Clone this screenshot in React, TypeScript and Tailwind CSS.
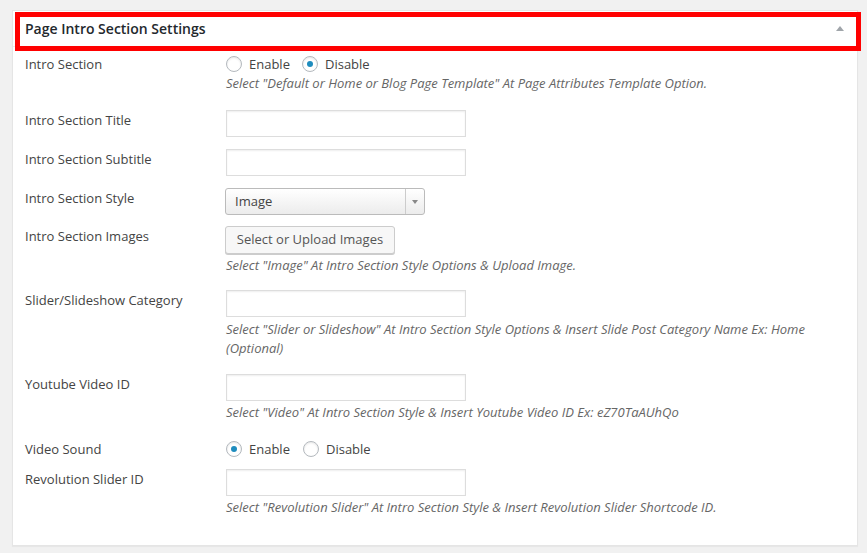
import React from "react";

const font = { fontFamily: '"Open Sans", "Liberation Sans", sans-serif' };

function Radio({ checked, label }: { checked: boolean; label: string }) {
  return (
    <span className="flex items-center">
      <span className="flex h-4 w-4 items-center justify-center rounded-full border border-[#b4b9be] bg-white shadow-[inset_0_1px_2px_rgba(0,0,0,0.1)]">
        {checked && <span className="h-[6px] w-[6px] rounded-full bg-[#1e8cbe]" />}
      </span>
      <span className="ml-[7px] text-[13px] leading-5 text-[#444]">{label}</span>
    </span>
  );
}

function TextInput() {
  return (
    <div className="h-[27px] w-[240px] border border-[#ddd] bg-white shadow-[inset_0_1px_2px_rgba(0,0,0,0.07)]" />
  );
}

function Desc({ children }: { children: React.ReactNode }) {
  return <p className="mt-[2px] text-[13px] italic leading-[19px] text-[#666]">{children}</p>;
}

function Row({ label, mt, children }: { label: string; mt: string; children: React.ReactNode }) {
  return (
    <div className={`flex ${mt}`}>
      <div className="w-[201px] shrink-0 text-[13px] leading-5 text-[#444]">{label}</div>
      <div className="w-[620px]">{children}</div>
    </div>
  );
}

export default function App() {
  return (
    <div className="min-h-[553px] w-full bg-[#f1f1f1] pl-[12px] pr-[9px] pt-[10px]" style={font}>
      <div className="relative w-[846px] border border-[#e5e5e5] bg-white pb-[28px] shadow-[0_1px_1px_rgba(0,0,0,0.04)]">
        <div className="flex h-[36px] items-center justify-between border-b border-[#eee] pl-[12px] pr-[12px]">
          <h2 className="text-[14px] font-semibold text-[#23282d]">Page Intro Section Settings</h2>
          <svg width="8" height="5" viewBox="0 0 8 5" className="mr-[1px]">
            <path d="M0 5 L4 0 L8 5 Z" fill="#a0a5aa" />
          </svg>
        </div>
        <div className="pointer-events-none absolute left-[2px] top-[1px] h-[39px] w-[846px] border-[5px] border-[#ff0000]" />

        <div className="pl-[12px]">
          <Row label="Intro Section" mt="mt-[7px]">
            <div className="flex h-5 items-center gap-[12px]">
              <Radio checked={false} label="Enable" />
              <Radio checked={true} label="Disable" />
            </div>
            <p className="mt-0 text-[13px] italic leading-[19px] text-[#666]">
              Select "Default or Home or Blog Page Template" At Page Attributes Template Option.
            </p>
          </Row>

          <Row label="Intro Section Title" mt="mt-[17px]">
            <TextInput />
          </Row>

          <Row label="Intro Section Subtitle" mt="mt-[12px]">
            <TextInput />
          </Row>

          <Row label="Intro Section Style" mt="mt-[12px]">
            <div className="-ml-px flex h-[27px] w-[200px] items-center rounded-[3px] border border-[#bbb] bg-gradient-to-b from-white to-[#ececec]">
              <span className="flex-1 pl-[9px] text-[13px] text-[#444]">Image</span>
              <span className="flex h-full w-[19px] items-center justify-center border-l border-[#ccc]">
                <svg width="6" height="4" viewBox="0 0 6 4">
                  <path d="M0 0 L6 0 L3 4 Z" fill="#888" />
                </svg>
              </span>
            </div>
          </Row>

          <Row label="Intro Section Images" mt="mt-[11px]">
            <button className="-ml-px h-[28px] w-[170px] rounded-[3px] border border-[#ccc] bg-[#f7f7f7] text-[13px] text-[#555] shadow-[0_1px_0_#ccc]">
              Select or Upload Images
            </button>
            <Desc>Select "Image" At Intro Section Style Options &amp; Upload Image.</Desc>
          </Row>

          <Row label="Slider/Slideshow Category" mt="mt-[15px]">
            <TextInput />
            <p className="mt-[3px] text-[13px] italic leading-[19px] text-[#666]">
              Select "Slider or Slideshow" At Intro Section Style Options &amp; Insert Slide Post Category Name Ex: Home (Optional)
            </p>
          </Row>

          <Row label="Youtube Video ID" mt="mt-[16px]">
            <TextInput />
            <Desc>Select "Video" At Intro Section Style &amp; Insert Youtube Video ID Ex: eZ70TaAUhQo</Desc>
          </Row>

          <Row label="Video Sound" mt="mt-[17px]">
            <div className="flex h-5 items-center gap-[13px]">
              <Radio checked={true} label="Enable" />
              <Radio checked={false} label="Disable" />
            </div>
          </Row>

          <Row label="Revolution Slider ID" mt="mt-[10px]">
            <TextInput />
            <Desc>Select "Revolution Slider" At Intro Section Style &amp; Insert Revolution Slider Shortcode ID.</Desc>
          </Row>
        </div>
      </div>
    </div>
  );
}
